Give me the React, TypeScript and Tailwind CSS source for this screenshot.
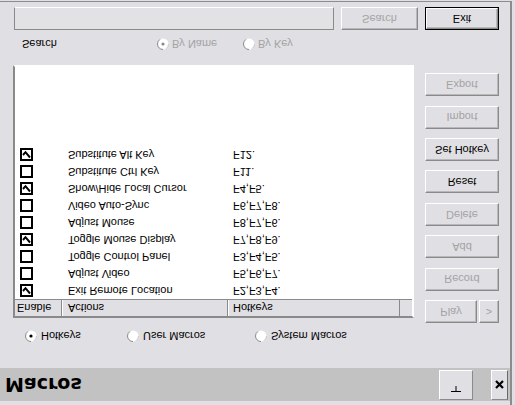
import React from 'react';

// The reference is shown upside down, so the dialog is laid out in its own
// order and the whole window is flipped on the Y axis at the end.

const rows = [
  { on: true, action: 'Exit Remote Location', keys: 'F2,F3,F4.' },
  { on: false, action: 'Adjust Video', keys: 'F5,F6,F7.' },
  { on: false, action: 'Toggle Control Panel', keys: 'F3,F4,F5.' },
  { on: true, action: 'Toggle Mouse Display', keys: 'F7,F8,F9.' },
  { on: false, action: 'Adjust Mouse', keys: 'F8,F7,F6.' },
  { on: false, action: 'Video Auto-Sync', keys: 'F6,F7,F8.' },
  { on: true, action: 'Show/Hide Local Cursor', keys: 'F4,F5.' },
  { on: false, action: 'Substitute Ctrl Key', keys: 'F11.' },
  { on: true, action: 'Substitute Alt Key', keys: 'F12.' },
];

const Btn: React.FC<{ label: string; disabled?: boolean; className?: string; def?: boolean }> = ({ label, disabled, className = '', def }) => (
  <div className={`${def ? 'border border-black' : ''} ${className}`}>
    <div
      className={`h-full w-full flex items-center justify-center border border-t-[#8a8a8a] border-r-[#8a8a8a] border-b-white border-l-white bg-[#e0dfe3] shadow-[inset_-1px_1px_#b8b8b8] ${
        disabled ? 'text-[#a3a3a3]' : 'text-black'
      }`}
    >
      {label}
    </div>
  </div>
);

const Radio: React.FC<{ checked?: boolean; disabled?: boolean }> = ({ checked, disabled }) => (
  <svg width="12" height="12" viewBox="0 0 12 12" className="shrink-0">
    <circle cx="6" cy="6" r="5.5" fill="#fff" />
    <path d="M6 0.5 A5.5 5.5 0 0 0 0.5 6 A5.5 5.5 0 0 0 3 10.6" fill="none" stroke="#8a8a8a" strokeWidth="1" />
    <path d="M9 1.4 A5.5 5.5 0 0 1 11.5 6" fill="none" stroke="#c8c8c8" strokeWidth="1" />
    {checked && <circle cx="6" cy="6" r="1.6" fill={disabled ? '#8a8a8a' : '#000'} />}
  </svg>
);

const Check: React.FC<{ on: boolean }> = ({ on }) => (
  <div className="w-[13px] h-[13px] border-2 border-black bg-white flex items-center justify-center">
    {on && (
      <svg width="9" height="9" viewBox="0 0 9 9">
        <path d="M1 4 L3.5 6.8 L8 1.5" fill="none" stroke="#000" strokeWidth="2" />
      </svg>
    )}
  </div>
);

export default function App() {
  return (
    <div className="w-[515px] h-[405px] bg-[#e0dfe3] overflow-hidden -scale-y-100 font-['Liberation_Sans',Arial,sans-serif] text-[11px] text-black">
      <div className="w-[512px] h-[404px] border-r-2 border-b border-[#8c8c8c] flex flex-col pt-[4px]">
        {/* title bar */}
        <div className="h-[33px] bg-[#c2c2c2] flex items-start pl-[5px] pr-[2px]">
          <div className="h-full flex items-center font-['DejaVu_Sans',sans-serif] font-bold text-[19px] leading-none">Macros</div>
          <div className="ml-auto mt-[1px] w-[34px] h-[30px] pb-[8px] border border-t-[#8a8a8a] border-r-[#8a8a8a] border-b-white border-l-white bg-[#e0dfe3] flex items-center justify-center">
            <svg width="10" height="6" viewBox="0 0 10 6">
              <path d="M0 0.5 H10 M5 0.5 V6" stroke="#000" strokeWidth="1" />
            </svg>
          </div>
          <div className="ml-[18px] mt-[1px] w-[17px] h-[30px] border border-t-[#8a8a8a] border-r-[#6a6a6a] border-b-white border-l-white bg-[#e0dfe3] flex items-center justify-center">
            <svg width="9" height="9" viewBox="0 0 9 9">
              <path d="M1 1 L8 8 M8 1 L1 8" stroke="#000" strokeWidth="2.2" />
            </svg>
          </div>
        </div>

        {/* macro type */}
        <div className="mt-[26px] h-[12px] flex items-center">
          <div className="ml-[25px] flex items-center gap-[4px] w-[102px]">
            <Radio checked />
            <span>Hotkeys</span>
          </div>
          <div className="flex items-center gap-[4px] w-[128px]">
            <Radio />
            <span>User Macros</span>
          </div>
          <div className="flex items-center gap-[4px]">
            <Radio />
            <span>System Macros</span>
          </div>
        </div>

        {/* list and buttons */}
        <div className="mt-[7px] flex items-start">
          <div className="ml-[13px] mt-[5px] w-[401px] h-[253px] border-2 border-t-[#8a8a8a] border-l-[#8a8a8a] border-b-white border-r-white bg-white flex flex-col">
            <div className="h-[17px] flex bg-[#e0dfe3] border-b border-[#8a8a8a]">
              <div className="w-[47px] pl-[2px] flex items-center border-r border-[#8a8a8a]">Enable</div>
              <div className="w-[166px] pl-[5px] flex items-center border-r border-[#8a8a8a] border-l border-l-white">Actions</div>
              <div className="w-[172px] pl-[4px] flex items-center border-r border-[#8a8a8a] border-l border-l-white">Hotkeys</div>
              <div className="flex-1" />
            </div>
            {rows.map((r) => (
              <div key={r.action} className="h-[17px] flex items-center">
                <div className="w-[53px] pl-[5px]">
                  <Check on={r.on} />
                </div>
                <div className="w-[165px]">{r.action}</div>
                <div>{r.keys}</div>
              </div>
            ))}
          </div>

          <div className="ml-[11px] w-[74px] flex flex-col gap-[9.4px]">
            <div className="h-[23px] flex gap-[2px]">
              <Btn label="Play" disabled className="w-[52px] h-[23px]" />
              <Btn label=">" disabled className="flex-1 h-[23px]" />
            </div>
            <Btn label="Record" disabled className="h-[23px]" />
            <Btn label="Add" disabled className="h-[23px]" />
            <Btn label="Delete" disabled className="h-[23px]" />
            <Btn label="Reset" className="h-[23px]" />
            <Btn label="Set Hotkey" className="h-[23px]" />
            <Btn label="Import" disabled className="h-[23px]" />
            <Btn label="Export" disabled className="h-[23px]" />
          </div>
        </div>

        {/* search options */}
        <div className="mt-[15px] h-[12px] flex items-center text-[#a3a3a3]">
          <div className="ml-[22px] w-[135px] text-black">Search</div>
          <div className="flex items-center gap-[3px] w-[86px]">
            <Radio checked disabled />
            <span>By Name</span>
          </div>
          <div className="flex items-center gap-[3px]">
            <Radio disabled />
            <span>By Key</span>
          </div>
        </div>

        {/* search row */}
        <div className="mt-[8px] h-[23px] flex">
          <div className="ml-[14px] w-[320px] h-full border border-t-[#8a8a8a] border-l-[#8a8a8a] border-r-[#8a8a8a] border-b-white bg-[#e2e2e4]" />
          <Btn label="Search" disabled className="ml-[7px] w-[77px] h-full" />
          <Btn label="Exit" def className="ml-[7px] w-[74px] h-full" />
        </div>
      </div>
    </div>
  );
}
